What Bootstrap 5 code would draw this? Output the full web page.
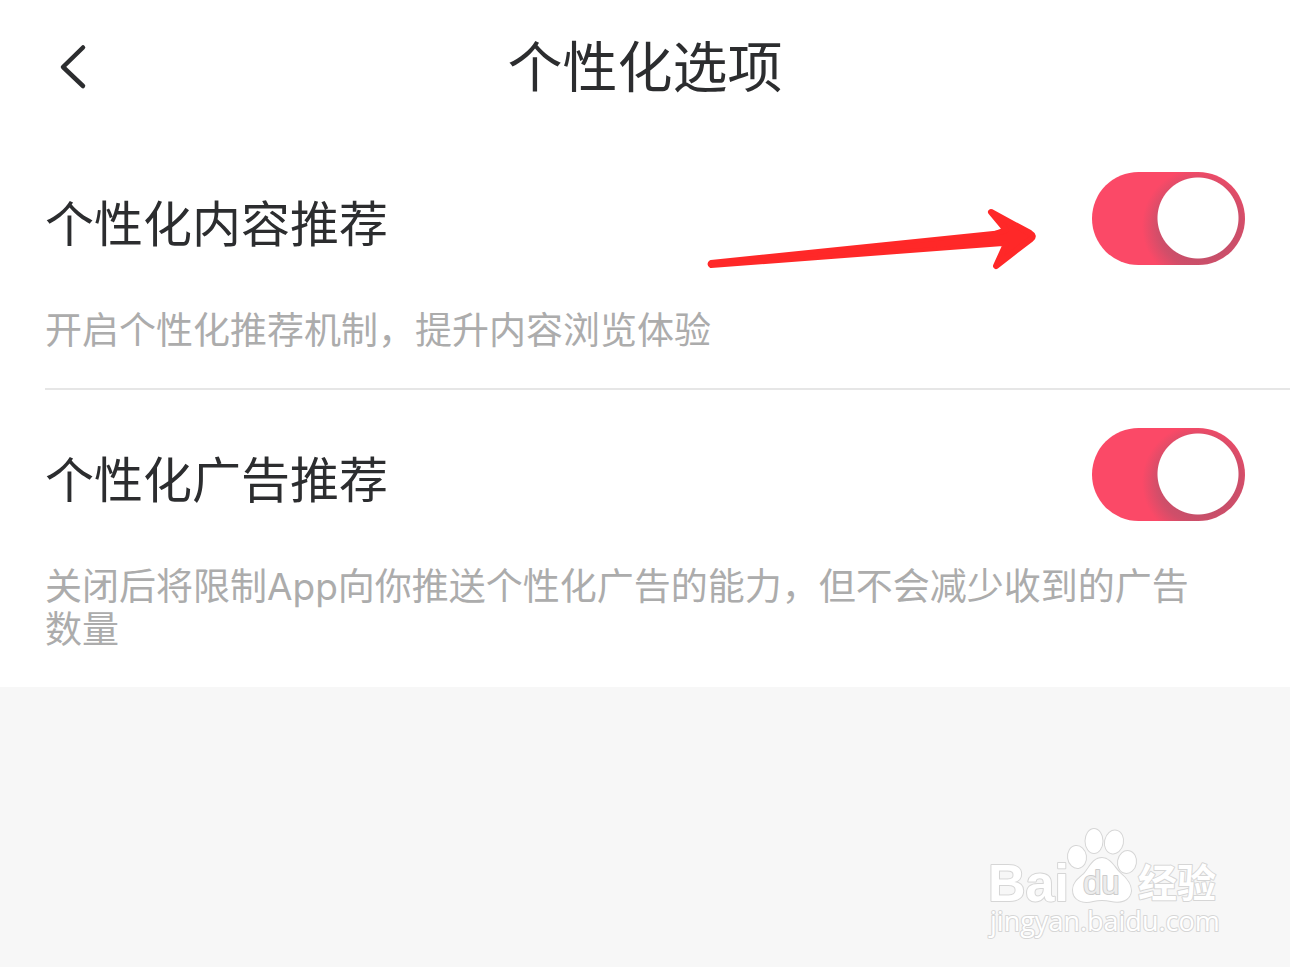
<!DOCTYPE html>
<html lang="zh-CN">
<head>
<meta charset="utf-8">
<meta name="viewport" content="width=device-width, initial-scale=1">
<title>个性化选项</title>
<link href="https://cdn.jsdelivr.net/npm/bootstrap@5.3.0/dist/css/bootstrap.min.css" rel="stylesheet">
<style>
  body {
    background: #f7f7f7;
    color: #2c2d2f;
    font-family: Inter, "Noto Sans CJK SC", sans-serif;
  }
  .page { min-height: 100vh; }
  .topbar { padding: 26px 45px; }
  .topbar h1 { font-size: 55px; line-height: 82px; }
  .back { width: 56px; height: 56px; color: #2c2d2f; }
  .option { margin-left: 45px; padding: 38px 45px 36px 0; }
  .option + .option { border-top: 2px solid #e6e6e6; }
  .option-name { font-size: 49px; line-height: 94px; padding-top: 6px; }
  .option-note { font-size: 37px; line-height: 43px; color: #acacac; margin-top: 37px; padding-right: 20px; }
  .form-switch .toggle {
    width: 153px;
    height: 93px;
    border: 0;
    border-radius: 47px;
    background-color: #ddd;
    background-position: 0 0;
    background-size: 100% 100%;
    background-image: radial-gradient(circle at 46px 46px, #fff 40px, transparent 41px);
  }
  .form-switch .toggle:checked {
    background-color: #fb4967;
    background-position: 0 0;
    background-image:
      radial-gradient(circle at 106px 46px, #fff 40px, transparent 41px),
      radial-gradient(circle at 108px 54px, rgba(110, 90, 110, .4) 30px, rgba(110, 90, 110, .3) 42px, transparent 58px);
  }
  .pointer { left: 660px; top: 74px; width: 332px; height: 64px; }
  .watermark { right: 64px; bottom: 22px; width: 242px; height: 120px; }
</style>
</head>
<body>
<div class="page position-relative">
  <header class="topbar bg-white position-relative d-flex align-items-center justify-content-center">
    <button type="button" class="back btn p-0 border-0 position-absolute start-0 ms-5" aria-label="返回">
      <svg width="56" height="56" viewBox="0 0 56 56" fill="none" stroke="currentColor" stroke-width="4.5" stroke-linecap="round" stroke-linejoin="round" aria-hidden="true"><path d="M35 8.500L15 28L35 47"/></svg>
    </button>
    <h1 class="m-0 fw-normal">个性化选项</h1>
  </header>

  <main class="bg-white">
    <section class="option position-relative">
      <div class="form-check form-switch form-check-reverse d-flex justify-content-between p-0 m-0 text-start">
        <label class="option-name" for="content">个性化内容推荐</label>
        <input class="form-check-input toggle m-0 flex-shrink-0" type="checkbox" role="switch" id="content" checked>
      </div>
      <p class="option-note mb-0">开启个性化推荐机制，提升内容浏览体验</p>
      <svg class="pointer position-absolute" viewBox="0 0 332 64" fill="#ff2828" stroke="#ff2828" stroke-linejoin="round" aria-hidden="true">
        <path stroke-width="4" d="M6 54L298 24V36L6 58Q3 56 6 54Z"/>
        <path stroke-width="6" d="M286 4L325 25Q330 28 326 31L291 58L301 36L290 34V26L301 22Z"/>
      </svg>
    </section>
    <section class="option">
      <div class="form-check form-switch form-check-reverse d-flex justify-content-between p-0 m-0 text-start">
        <label class="option-name" for="ads">个性化广告推荐</label>
        <input class="form-check-input toggle m-0 flex-shrink-0" type="checkbox" role="switch" id="ads" checked>
      </div>
      <p class="option-note mb-0">关闭后将限制App向你推送个性化广告的能力，但不会减少收到的广告数量</p>
    </section>
  </main>

  <svg class="watermark position-absolute" viewBox="0 0 242 120" fill="#fff" stroke="#d6d6d6" stroke-width="2" stroke-linejoin="round" paint-order="stroke" role="img" aria-label="Baidu 经验">
    <text x="4" y="76" font-family="Liberation Sans, sans-serif" font-weight="700" font-size="52">Bai</text>
    <g>
      <ellipse cx="93" cy="32" rx="9" ry="11" transform="rotate(-8 93 32)"/>
      <ellipse cx="110" cy="16" rx="8.500" ry="12"/>
      <ellipse cx="130" cy="17" rx="9" ry="11.500" transform="rotate(12 130 17)"/>
      <ellipse cx="143" cy="37" rx="9" ry="11" transform="rotate(10 143 37)"/>
      <path d="M118 33C126 33 130 42 136 48C143 54 147 59 147 66C146 76 136 78 127 76Q118 74 109 76C99 79 89 75 89 65C89 58 94 54 100 49C106 42 109 33 118 33Z"/>
    </g>
    <text x="99" y="69" font-family="Liberation Sans, sans-serif" font-size="33" fill="#ececec" stroke="#cccccc">du</text>
    <text x="154" y="72" font-family="Noto Sans CJK SC, sans-serif" font-weight="700" font-size="39">经验</text>
    <text x="6" y="106" font-family="Open Sans, sans-serif" font-size="27">jingyan.baidu.com</text>
  </svg>
</div>
<script src="https://cdn.jsdelivr.net/npm/bootstrap@5.3.0/dist/js/bootstrap.bundle.min.js"></script>
</body>
</html>
